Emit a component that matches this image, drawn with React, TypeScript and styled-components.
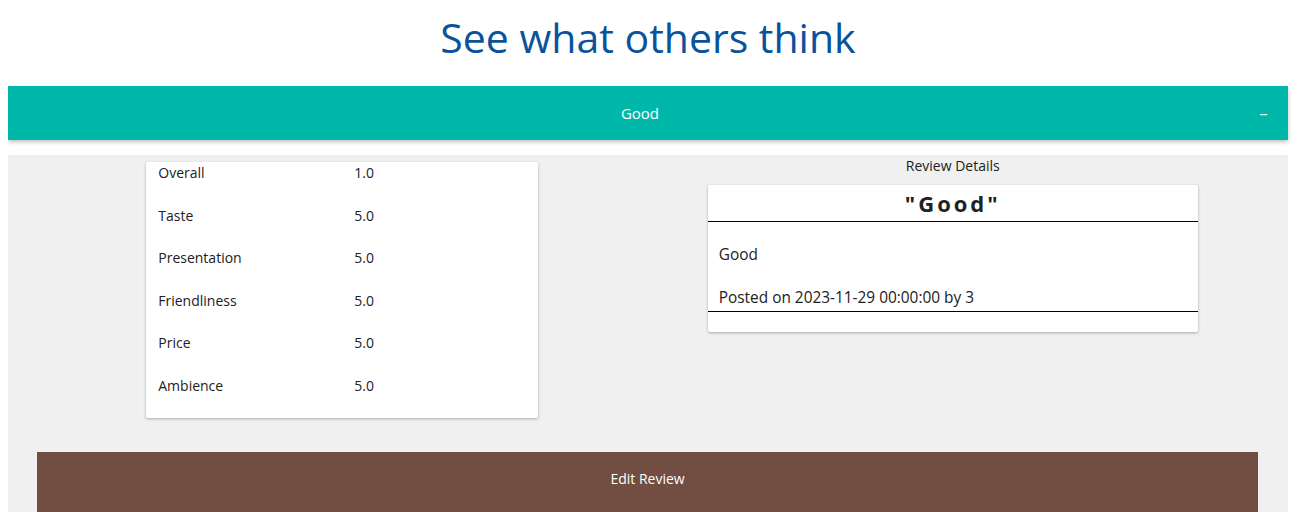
import React from "react";
import styled, { createGlobalStyle } from "styled-components";

const GlobalStyle = createGlobalStyle`
  html, body { margin: 0; padding: 0; background: #ffffff; }
  body {
    margin: 8px;
    font-family: "Open Sans", "Noto Sans", sans-serif;
    color: #212121;
  }
  * { box-sizing: border-box; }
`;

const Page = styled.div`
  width: 1280px;
`;

const Title = styled.h1`
  margin: 0;
  height: 78px;
  padding-top: 0;
  text-align: center;
  font-size: 41px;
  font-weight: 400;
  line-height: 59px;
  color: #0b529c;
`;

const AccordionHeader = styled.div`
  display: flex;
  align-items: center;
  height: 54px;
  padding: 0 20px 1px 13px;
  background: #00b8a9;
  color: #ffffff;
  font-size: 15px;
  box-shadow: 0 2px 4px rgba(0, 0, 0, 0.25);
`;

const HeaderTitle = styled.span`
  flex: 1;
  text-align: center;
`;

const Collapse = styled.span`
  font-size: 16px;
  width: 9px;
  text-align: center;
`;

const Panel = styled.div`
  margin-top: 15px;
  background: #f0f0f0;
  padding: 7px 30px 0 29px;
  height: 360px;
`;

const Columns = styled.div`
  display: grid;
  grid-template-columns: 1fr 1fr;
  align-items: start;
`;

const Column = styled.div`
  display: flex;
  flex-direction: column;
  align-items: center;
`;

const Card = styled.div<{ $width: number }>`
  width: ${(p) => p.$width}px;
  background: #ffffff;
  border-radius: 2px;
  box-shadow: 0 1px 3px rgba(0, 0, 0, 0.3);
`;

const ScoreList = styled.div`
  padding: 0 12px;
`;

const ScoreRow = styled.div`
  display: flex;
  font-size: 14px;
  line-height: 21px;
  margin-bottom: 21.6px;
`;

const ScoreLabel = styled.span`
  width: 196px;
`;

const ColumnCaption = styled.div`
  font-size: 14px;
  line-height: 20px;
  margin-top: -6px;
  margin-bottom: 9px;
`;

const ReviewTitle = styled.div`
  text-align: center;
  font-size: 22px;
  font-weight: 700;
  letter-spacing: 3px;
  line-height: 36px;
  border-bottom: 1px solid #000000;
`;

const ReviewBody = styled.div`
  padding: 0 11px 3px;
  font-size: 15.4px;
  border-bottom: 1px solid #000000;
`;

const ReviewText = styled.p`
  margin: 22px 0 0;
  line-height: 21px;
`;

const ReviewMeta = styled.p`
  margin: 22px 0 0;
  line-height: 21px;
`;

const CardFoot = styled.div`
  height: 20px;
`;

const EditButton = styled.button`
  display: block;
  width: 100%;
  margin-top: 34px;
  height: 60px;
  border: none;
  background: #714d42;
  color: #ffffff;
  font-family: inherit;
  font-size: 14px;
  padding: 0 0 6px;
`;

const scores: [string, string][] = [
  ["Overall", "1.0"],
  ["Taste", "5.0"],
  ["Presentation", "5.0"],
  ["Friendliness", "5.0"],
  ["Price", "5.0"],
  ["Ambience", "5.0"],
];

export default function App() {
  return (
    <Page>
      <GlobalStyle />
      <Title>See what others think</Title>
      <AccordionHeader>
        <HeaderTitle>Good</HeaderTitle>
        <Collapse>–</Collapse>
      </AccordionHeader>
      <Panel>
        <Columns>
          <Column>
            <Card $width={392}>
              <ScoreList>
                {scores.map(([label, value]) => (
                  <ScoreRow key={label}>
                    <ScoreLabel>{label}</ScoreLabel>
                    <span>{value}</span>
                  </ScoreRow>
                ))}
              </ScoreList>
            </Card>
          </Column>
          <Column>
            <ColumnCaption>Review Details</ColumnCaption>
            <Card $width={490}>
              <ReviewTitle>"Good"</ReviewTitle>
              <ReviewBody>
                <ReviewText>Good</ReviewText>
                <ReviewMeta>Posted on 2023-11-29 00:00:00 by 3</ReviewMeta>
              </ReviewBody>
              <CardFoot />
            </Card>
          </Column>
        </Columns>
        <EditButton>Edit Review</EditButton>
      </Panel>
    </Page>
  );
}
